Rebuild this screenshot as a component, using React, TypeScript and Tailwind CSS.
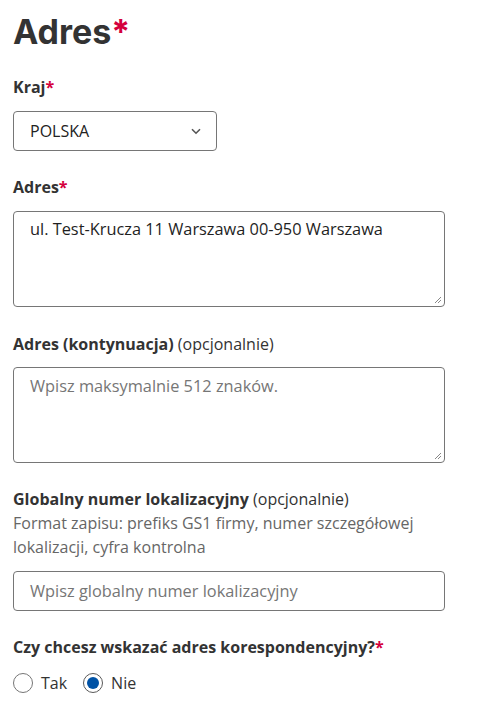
import React from "react";

const Req = () => <span className="text-[#d4003c]">*</span>;

export default function App() {
  return (
    <div className="min-h-screen bg-white px-[13px] pt-[8px] text-[16px] leading-[24px] text-[#333333] font-['Open_Sans',sans-serif]">
      <h1 className="font-['Inter',sans-serif] text-[34px] leading-[48px] font-bold tracking-[0px] text-[#333333]">
        Adres<Req />
      </h1>

      <div className="mt-[19px] font-bold">
        Kraj<Req />
      </div>
      <div className="mt-[12px] flex h-[40px] w-[204px] items-center justify-between rounded-[4px] border border-[#767676] pl-[16px] pr-[15px] text-[#222]">
        <span>POLSKA</span>
        <svg width="10" height="7" viewBox="0 0 10 7" fill="none">
          <path d="M1 1.2l4 4 4-4" stroke="#555" strokeWidth="1.6" />
        </svg>
      </div>

      <div className="mt-[24px] font-bold">
        Adres<Req />
      </div>
      <div className="mt-[12px] h-[96px] w-[432px] rounded-[4px] border border-[#767676] px-[16px] pt-[5px] text-[16.35px] text-[#1f1f1f] relative">
        ul. Test-Krucza 11 Warszawa 00-950 Warszawa
        <svg className="absolute right-[2px] bottom-[2px]" width="8" height="8" viewBox="0 0 8 8">
          <path d="M7 1L1 7M7 4L4 7" stroke="#888" strokeWidth="1" />
        </svg>
      </div>

      <div className="mt-[25px]">
        <span className="font-bold">Adres (kontynuacja)</span> (opcjonalnie)
      </div>
      <div className="mt-[11px] h-[96px] w-[432px] rounded-[4px] border border-[#767676] px-[16px] pt-[6px] text-[16.35px] text-[#767676] relative">
        Wpisz maksymalnie 512 znaków.
        <svg className="absolute right-[2px] bottom-[2px]" width="8" height="8" viewBox="0 0 8 8">
          <path d="M7 1L1 7M7 4L4 7" stroke="#888" strokeWidth="1" />
        </svg>
      </div>

      <div className="mt-[24px]">
        <span className="font-bold">Globalny numer lokalizacyjny</span> (opcjonalnie)
      </div>
      <div className="w-[432px] text-[#666666]">
        Format zapisu: prefiks GS1 firmy, numer szczegółowej lokalizacji, cyfra kontrolna
      </div>
      <div className="mt-[12px] flex h-[40px] w-[432px] items-center rounded-[4px] border border-[#767676] px-[16px] text-[16.35px] text-[#767676]">
        Wpisz globalny numer lokalizacyjny
      </div>

      <div className="mt-[24px] font-bold">
        Czy chcesz wskazać adres korespondencyjny?<Req />
      </div>
      <div className="mt-[12px] flex items-center">
        <span className="h-[20px] w-[20px] rounded-full border border-[#767676] bg-white" />
        <span className="ml-[8px]">Tak</span>
        <span className="ml-[16px] flex h-[20px] w-[20px] items-center justify-center rounded-full border border-[#5a5a5a] bg-white">
          <span className="h-[12px] w-[12px] rounded-full bg-[#0052a5]" />
        </span>
        <span className="ml-[8px]">Nie</span>
      </div>
    </div>
  );
}
